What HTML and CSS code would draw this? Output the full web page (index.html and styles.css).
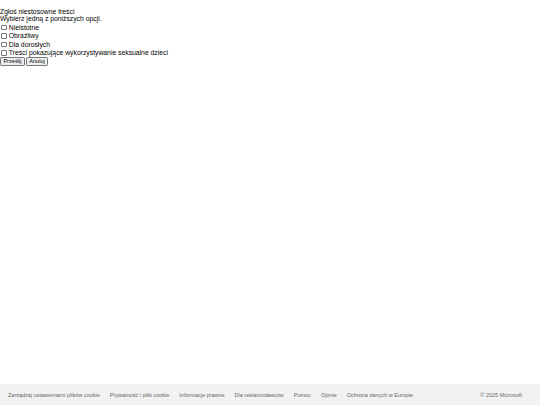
FILE: index.html
```html
<!DOCTYPE html>
<html>
<head>
  <meta charset="utf-8">
  <title>Zgłoś niestosowne treści</title>
  <link rel="stylesheet" href="styles.css">
</head>
<body>
  <div class="page">
    <form class="report">
      <div class="title">Zgłoś niestosowne treści</div>
      <div class="hint">Wybierz jedną z poniższych opcji.</div>
      <label class="option"><input type="checkbox" name="reason">Nieistotne</label>
      <label class="option"><input type="checkbox" name="reason">Obraźliwy</label>
      <label class="option"><input type="checkbox" name="reason">Dla dorosłych</label>
      <label class="option"><input type="checkbox" name="reason">Treści pokazujące wykorzystywanie seksualne dzieci</label>
      <div class="actions">
        <button type="submit">Prześlij</button><button type="button">Anuluj</button>
      </div>
    </form>
  </div>
  <footer class="footer">
    <div class="links">
      <a href="#">Zarządzaj ustawieniami plików cookie</a>
      <a href="#">Prywatność i pliki cookie</a>
      <a href="#">Informacje prawne</a>
      <a href="#">Dla reklamodawców</a>
      <a href="#">Pomoc</a>
      <a href="#">Opinie</a>
      <a href="#">Ochrona danych w Europie</a>
    </div>
    <span class="copy">© 2025 Microsoft</span>
  </footer>
</body>
</html>
```

FILE: styles.css
```css
* {
    box-sizing: border-box;
}
html, body {
    height: 100%;
}
body {
    margin: 0;
    display: flex;
    flex-direction: column;
    font-family: "Liberation Sans", Arial, sans-serif;
    font-size: 6.8px;
    color: #000;
    background-color: #fff;
}
.page {
    flex: 1;
    padding-top: 7.5px;
}
.title, .hint {
    line-height: 7.8px;
}
.option {
    display: flex;
    align-items: center;
    height: 8.5px;
}
.option input {
    appearance: none;
    width: 5.6px;
    height: 5.6px;
    margin: 0 1.8px 0 1.4px;
    border: 0.6px solid #767676;
    border-radius: 1px;
    background-color: #fff;
}
.actions {
    display: flex;
    margin-top: 0;
}
.actions button {
    font-family: inherit;
    font-size: 5.6px;
    padding: 0 2.4px;
    margin: 0 1px 0 0;
    border: 0.6px solid #767676;
    border-radius: 1.2px;
    background-color: #efefef;
    color: #000;
    height: 9px;
    line-height: 7px;
}

/* Footer */
.footer {
    display: flex;
    justify-content: space-between;
    align-items: center;
    height: 21px;
    padding: 0 18px 0 8px;
    background-color: #f2f2f2;
    font-size: 5.5px;
}
.links {
    display: flex;
    gap: 10px;
}
.footer a, .copy {
    color: #666;
    text-decoration: none;
}
```
